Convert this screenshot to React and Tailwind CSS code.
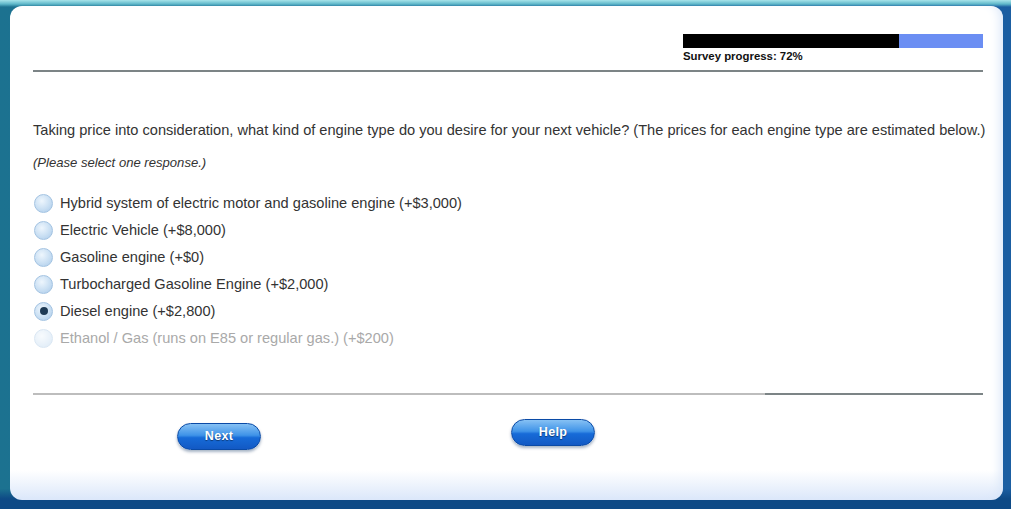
import { useState } from "react";

// Survey question screen - engine type
const options = [
  { id: 1, label: "Hybrid system of electric motor and gasoline engine (+$3,000)" },
  { id: 2, label: "Electric Vehicle (+$8,000)" },
  { id: 3, label: "Gasoline engine (+$0)" },
  { id: 4, label: "Turbocharged Gasoline Engine (+$2,000)" },
  { id: 5, label: "Diesel engine (+$2,800)" },
  { id: 6, label: "Ethanol / Gas (runs on E85 or regular gas.) (+$200)", faded: true },
];

const Radio = ({ checked, faded }) => (
  <span
    className={`relative flex h-[19px] w-[19px] shrink-0 items-center justify-center rounded-full border border-[#a3c3e2] bg-[radial-gradient(circle_at_40%_35%,#eef6fd_0%,#c9dff3_55%,#a9c9e9_100%)] ${
      faded ? "opacity-40" : ""
    }`}
  >
    {checked && <span className="h-[8px] w-[8px] rounded-full bg-[#1d3a55]" />}
  </span>
);

const PillButton = ({ children }) => (
  <button className="h-[27px] w-[84px] rounded-full border border-[#0a4aa6] bg-[linear-gradient(to_bottom,#86c1f4_0%,#3f93e8_45%,#176bd8_55%,#1259c4_100%)] text-[12.5px] font-bold tracking-wide text-white shadow-[0_2px_3px_rgba(0,40,90,0.35)] [text-shadow:0_1px_1px_rgba(0,0,0,0.45)] font-['Liberation_Sans',Arial,sans-serif]">
    {children}
  </button>
);

export default function App() {
  const [selected, setSelected] = useState(5);

  return (
    <div className="h-[509px] w-[1011px] overflow-hidden bg-[linear-gradient(to_bottom,#a8e4ea_0px,#5fb8ca_4px,transparent_7px),linear-gradient(to_bottom,transparent_96%,#0e4a86_98%),linear-gradient(to_right,#1c7290_0%,#1a6a98_50%,#1b5ea2_100%)] pl-[10px] pr-[8px] pt-[6px] font-['Liberation_Sans',Arial,sans-serif]">
      <div className="flex h-[494px] flex-col rounded-[12px] bg-[linear-gradient(to_bottom,#ffffff_0%,#ffffff_94%,#dbe7fa_100%)] pl-[23px] pr-[20px] shadow-[inset_-10px_0_12px_-8px_#d6e4f8]">
        {/* Header */}
        <div className="flex justify-end pt-[28px]">
          <div className="w-[300px]">
            <div className="flex h-[14px] w-full">
              <div className="h-full w-[72%] bg-black" />
              <div className="h-full flex-1 bg-[#6b8ef3]" />
            </div>
            <div className="mt-[1px] text-[11.4px] font-bold leading-[14px] text-[#111]">
              Survey progress: 72%
            </div>
          </div>
        </div>
        <div className="mt-[7px] h-[2px] w-full bg-[#7c8486]" />

        {/* Question */}
        <p className="mt-[49px] whitespace-nowrap text-[14.6px] leading-[18px] text-[#333]">
          Taking price into consideration, what kind of engine type do you desire for your next vehicle? (The prices for each engine type are estimated below.)
        </p>
        <p className="mt-[16px] text-[13.1px] italic leading-[16px] text-[#333]">
          (Please select one response.)
        </p>

        <div className="mt-[23px] flex flex-col gap-[9px]">
          {options.map((o) => (
            <label
              key={o.id}
              onClick={() => !o.faded && setSelected(o.id)}
              className="flex h-[18px] cursor-pointer items-center gap-[7px] pl-[1px]"
            >
              <Radio checked={selected === o.id} faded={o.faded} />
              <span
                className={`text-[14.6px] leading-[18px] ${
                  o.faded ? "text-[#a9a9a9]" : "text-[#333]"
                }`}
              >
                {o.label}
              </span>
            </label>
          ))}
        </div>

        <div className="mt-[46px] flex h-[2px] w-full">
          <div className="h-full w-[77%] bg-[#bdbdbd]" />
          <div className="h-full flex-1 bg-[#7c8486]" />
        </div>

        {/* Buttons */}
        <div className="relative mt-[22px] flex">
          <div className="ml-[144px] mt-[6px]">
            <PillButton>Next</PillButton>
          </div>
          <div className="ml-[250px] mt-[2px]">
            <PillButton>Help</PillButton>
          </div>
        </div>
      </div>
    </div>
  );
}
